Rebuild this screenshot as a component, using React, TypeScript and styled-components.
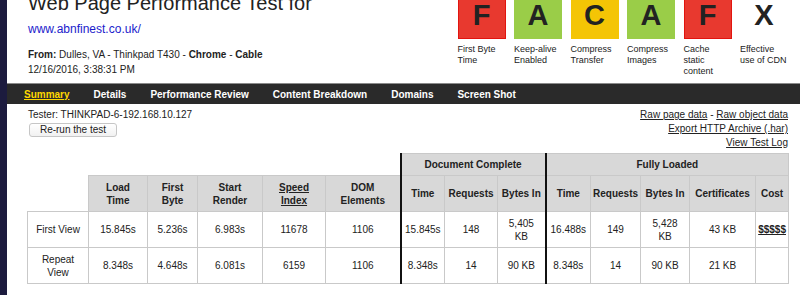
import React from 'react';
import styled, { createGlobalStyle } from 'styled-components';

const GlobalStyle = createGlobalStyle`
  html, body {
    margin: 0;
    padding: 0;
    background: #fff;
  }
  body {
    font-family: "Liberation Sans", Arial, Helvetica, sans-serif;
    color: #222;
  }
`;

const Page = styled.div`
  display: flex;
  height: 295px;
  overflow: hidden;
`;

const Rail = styled.div`
  width: 7px;
  flex: none;
  background: #1c1b3e;
`;

const Main = styled.div`
  flex: 1;
  min-width: 0;
  display: flex;
  flex-direction: column;
`;

const Header = styled.header`
  display: flex;
  justify-content: space-between;
  margin-top: -9px;
  height: 92px;
  padding: 0 12px 0 21px;
`;

const TitleBlock = styled.div`
  display: flex;
  flex-direction: column;
`;

const Title = styled.h1`
  margin: 0;
  font-size: 20px;
  font-weight: normal;
  line-height: 24px;
  color: #222;
  white-space: nowrap;
`;

const SiteUrl = styled.a`
  display: block;
  margin-top: 7px;
  font-size: 12px;
  line-height: 14px;
  color: #1b1bcc;
  text-decoration: none;
`;

const Meta = styled.div`
  margin-top: 11px;
  font-size: 10px;
  line-height: 15px;
`;

const Grades = styled.div`
  display: flex;
  gap: 8.5px;
  align-items: flex-start;
`;

const Grade = styled.div`
  width: 48px;
`;

const GradeBox = styled.div<{ $bg: string; $edge: string }>`
  height: 48px;
  box-sizing: border-box;
  border: 1px solid ${p => p.$edge};
  background: ${p => p.$bg};
  display: flex;
  align-items: center;
  justify-content: center;
  font-size: 29px;
  font-weight: bold;
  color: #222;
`;

const GradeLabel = styled.div`
  margin-top: 5px;
  font-size: 9px;
  line-height: 11px;
`;

const Nav = styled.nav`
  height: 21px;
  box-sizing: border-box;
  border-top: 1px solid #8a8a8a;
  background: #2a2a2a;
  display: flex;
  align-items: center;
  padding-left: 5px;
`;

const NavLink = styled.a<{ $active?: boolean }>`
  padding: 0 12px;
  font-size: 10px;
  font-weight: bold;
  color: ${p => (p.$active ? '#ffd800' : '#fff')};
  text-decoration: ${p => (p.$active ? 'underline' : 'none')};
  white-space: nowrap;
`;

const Content = styled.div`
  padding: 4px 12px 0 20px;
`;

const TopRow = styled.div`
  display: flex;
  justify-content: space-between;
`;

const Tester = styled.div`
  font-size: 10px;
  line-height: 14px;
  padding-left: 1px;
`;

const RerunButton = styled.button`
  display: block;
  margin: 1px 0 0 2px;
  width: 88px;
  height: 14px;
  padding: 0;
  box-sizing: border-box;
  border: 1px solid #c6c6c6;
  border-radius: 3px;
  background: linear-gradient(#ffffff, #f1f1f1);
  font-family: inherit;
  font-size: 10px;
  line-height: 12px;
  color: #222;
`;

const Links = styled.div`
  text-align: right;
  font-size: 10px;
  line-height: 14px;
`;

const TextLink = styled.a`
  color: #222;
  text-decoration: underline;
`;

const Results = styled.table`
  margin-top: 3px;
  border-collapse: collapse;
  table-layout: fixed;
  width: 761px;
  font-size: 10px;
  line-height: 13px;
  color: #222;
`;

const Row = styled.tr<{ $h: number }>`
  height: ${p => p.$h}px;
`;

const Blank = styled.th`
  border: none;
  background: none;
  padding: 0;
`;

const Head = styled.th<{ $thick?: boolean }>`
  border: 1px solid #c9c9c9;
  border-left: ${p => (p.$thick ? '2px solid #111' : '1px solid #c9c9c9')};
  background: #d8d8d8;
  font-weight: bold;
  text-align: center;
  vertical-align: middle;
  padding: 0;
`;

const Cell = styled.td<{ $thick?: boolean }>`
  border: 1px solid #c9c9c9;
  border-left: ${p => (p.$thick ? '2px solid #111' : '1px solid #c9c9c9')};
  background: #fff;
  text-align: center;
  vertical-align: middle;
  padding: 0;
`;

const Underlined = styled.span<{ $bold?: boolean }>`
  text-decoration: underline;
  font-weight: ${p => (p.$bold ? 'bold' : 'inherit')};
`;

const grades = [
  { letter: 'F', bg: '#e8392f', edge: '#e2140f', label: ['First Byte', 'Time'] },
  { letter: 'A', bg: '#9acd48', edge: '#9acd48', label: ['Keep-alive', 'Enabled'] },
  { letter: 'C', bg: '#f4c505', edge: '#f4c505', label: ['Compress', 'Transfer'] },
  { letter: 'A', bg: '#9acd48', edge: '#9acd48', label: ['Compress', 'Images'] },
  { letter: 'F', bg: '#e8392f', edge: '#e2140f', label: ['Cache', 'static', 'content'] },
  { letter: 'X', bg: 'transparent', edge: 'transparent', label: ['Effective', 'use of CDN'] },
];

const tabs = ['Summary', 'Details', 'Performance Review', 'Content Breakdown', 'Domains', 'Screen Shot'];

const widths = [61, 59, 50, 65, 63, 75, 44, 53, 48, 45, 50, 49, 66, 33];

type ViewRow = {
  label: React.ReactNode;
  values: React.ReactNode[];
};

const rows: ViewRow[] = [
  {
    label: 'First View',
    values: [
      '15.845s', '5.236s', '6.983s', '11678', '1106',
      '15.845s', '148', <>5,405<br />KB</>,
      '16.488s', '149', <>5,428<br />KB</>, '43 KB', <Underlined $bold>$$$$$</Underlined>,
    ],
  },
  {
    label: <>Repeat<br />View</>,
    values: [
      '8.348s', '4.648s', '6.081s', '6159', '1106',
      '8.348s', '14', '90 KB',
      '8.348s', '14', '90 KB', '21 KB', '',
    ],
  },
];

// columns that start a group get the heavy divider
const thickCols = [5, 8];

export default function App() {
  return (
    <Page>
      <GlobalStyle />
      <Rail />
      <Main>
        <Header>
          <TitleBlock>
            <Title>Web Page Performance Test for</Title>
            <SiteUrl href="#">www.abnfinest.co.uk/</SiteUrl>
            <Meta>
              <b>From:</b> Dulles, VA - Thinkpad T430 - <b>Chrome</b> - <b>Cable</b>
              <br />
              12/16/2016, 3:38:31 PM
            </Meta>
          </TitleBlock>
          <Grades>
            {grades.map((g, i) => (
              <Grade key={i}>
                <GradeBox $bg={g.bg} $edge={g.edge}>{g.letter}</GradeBox>
                <GradeLabel>
                  {g.label.map((l, j) => (
                    <div key={j}>{l}</div>
                  ))}
                </GradeLabel>
              </Grade>
            ))}
          </Grades>
        </Header>

        <Nav>
          {tabs.map((t, i) => (
            <NavLink key={t} href="#" $active={i === 0}>{t}</NavLink>
          ))}
        </Nav>

        <Content>
          <TopRow>
            <div>
              <Tester>Tester: THINKPAD-6-192.168.10.127</Tester>
              <RerunButton>Re-run the test</RerunButton>
            </div>
            <Links>
              <div>
                <TextLink href="#">Raw page data</TextLink> - <TextLink href="#">Raw object data</TextLink>
              </div>
              <div>
                <TextLink href="#">Export HTTP Archive (.har)</TextLink>
              </div>
              <div>
                <TextLink href="#">View Test Log</TextLink>
              </div>
            </Links>
          </TopRow>

          <Results>
            <colgroup>
              {widths.map((w, i) => (
                <col key={i} style={{ width: w }} />
              ))}
            </colgroup>
            <thead>
              <Row $h={22}>
                <Blank colSpan={6} />
                <Head colSpan={3} $thick>Document Complete</Head>
                <Head colSpan={5} $thick>Fully Loaded</Head>
              </Row>
              <Row $h={36}>
                <Blank />
                <Head>Load<br />Time</Head>
                <Head>First<br />Byte</Head>
                <Head>Start<br />Render</Head>
                <Head><Underlined>Speed<br />Index</Underlined></Head>
                <Head>DOM<br />Elements</Head>
                <Head $thick>Time</Head>
                <Head>Requests</Head>
                <Head>Bytes In</Head>
                <Head $thick>Time</Head>
                <Head>Requests</Head>
                <Head>Bytes In</Head>
                <Head>Certificates</Head>
                <Head>Cost</Head>
              </Row>
            </thead>
            <tbody>
              {rows.map((r, i) => (
                <Row key={i} $h={36}>
                  <Cell>{r.label}</Cell>
                  {r.values.map((v, j) => (
                    <Cell key={j} $thick={thickCols.includes(j)}>{v}</Cell>
                  ))}
                </Row>
              ))}
            </tbody>
          </Results>
        </Content>
      </Main>
    </Page>
  );
}
